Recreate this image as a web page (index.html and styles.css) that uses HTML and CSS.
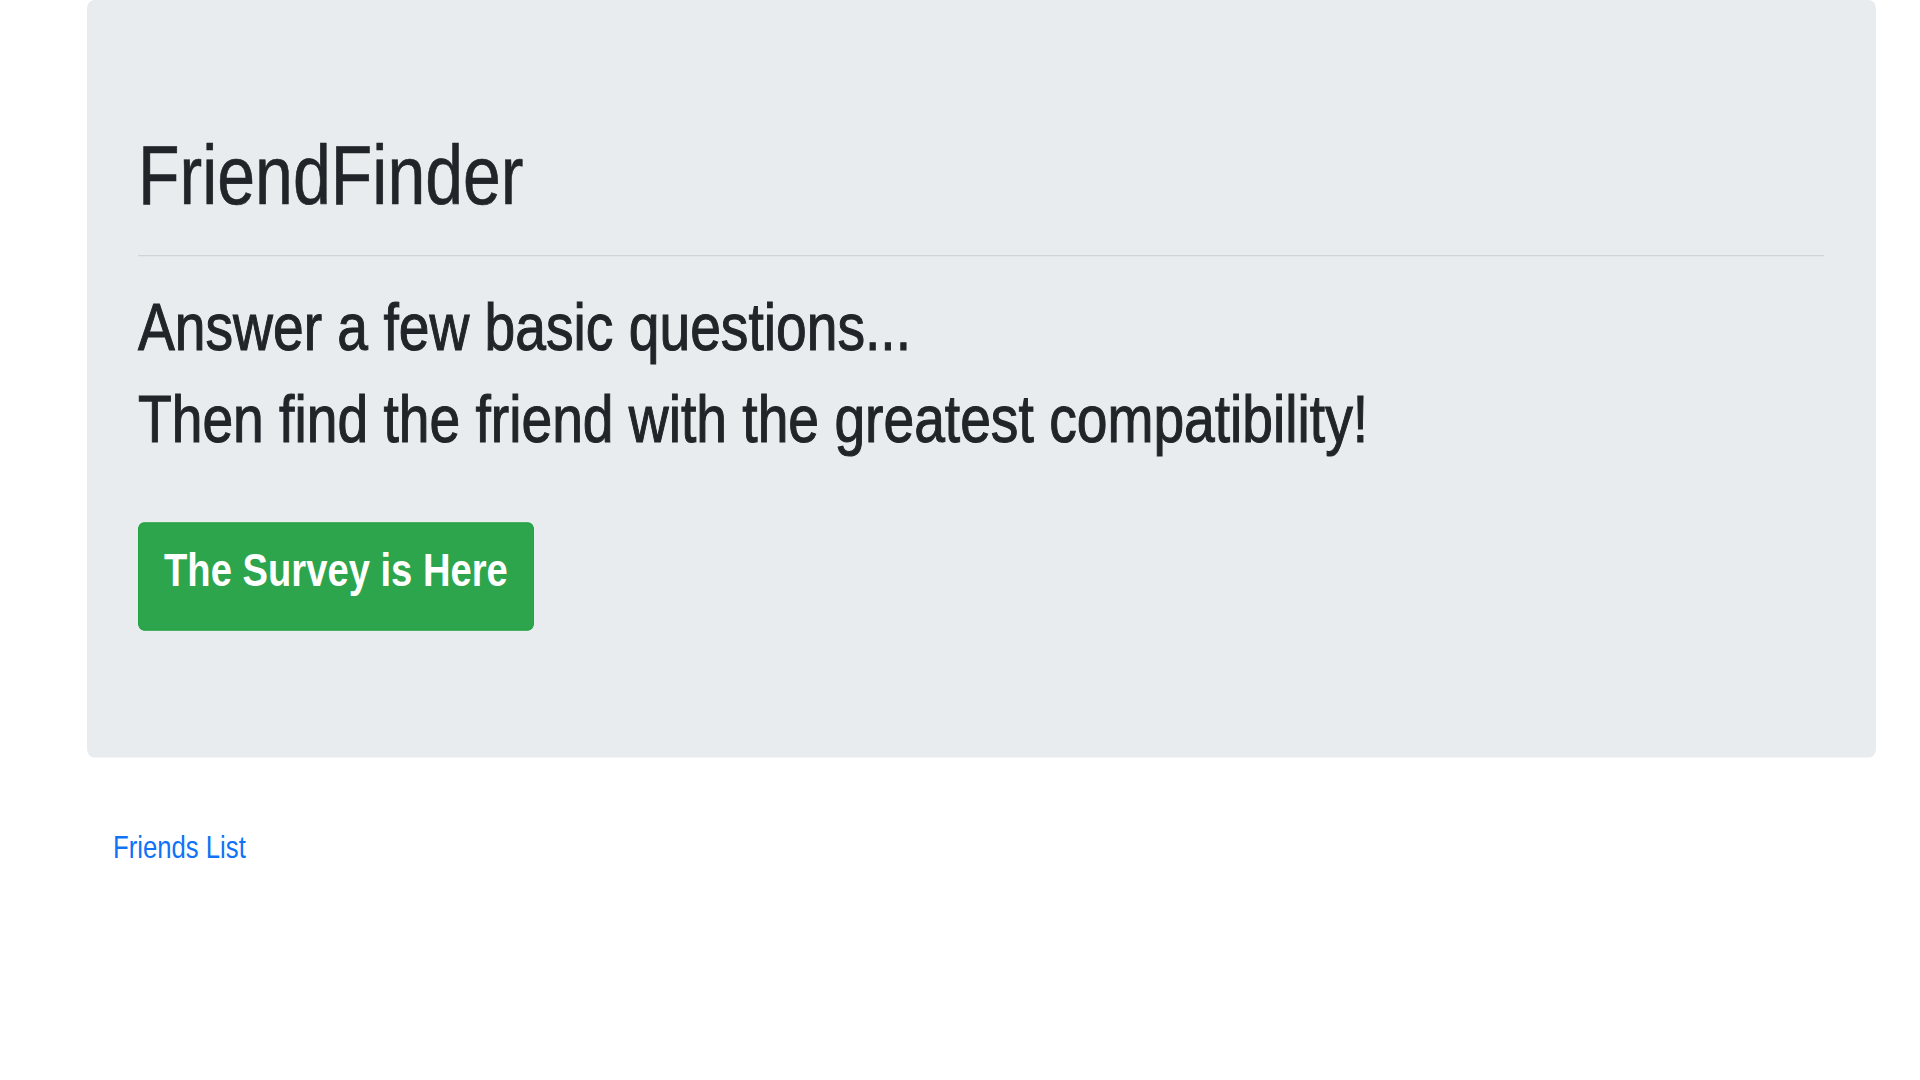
FILE: index.html
```html
<!DOCTYPE html>
<html lang="en">
<head>
<meta charset="utf-8">
<title>FriendFinder</title>
<link rel="stylesheet" href="styles.css">
</head>
<body>
<div class="page">
  <div class="jumbotron">
    <h1 class="title">FriendFinder</h1>
    <hr class="rule">
    <div class="lead">
      <h2 class="lead-line">Answer a few basic questions...</h2>
      <h2 class="lead-line">Then find the friend with the greatest compatibility!</h2>
    </div>
    <a class="btn-survey" href="#">The Survey is Here</a>
  </div>
  <div class="footer-links">
    <a class="friends-link" href="#">Friends List</a>
  </div>
</div>
</body>
</html>
```
FILE: styles.css
```css
html, body {
  margin: 0;
  padding: 0;
  background: #ffffff;
}

body {
  font-family: "Liberation Sans", Arial, Helvetica, sans-serif;
  color: #212529;
  min-height: 1080px;
}

.page {
  transform: scaleY(1.22);
  transform-origin: 0 0;
  width: 1920px;
  height: 880px;
}

.jumbotron {
  box-sizing: border-box;
  margin-left: 87px;
  width: 1789px;
  height: 621px;
  padding: 103px 52px 0 51px;
  background: #e9ecef;
  border-radius: 7px;
}

.title {
  margin: 0;
  font-size: 68px;
  font-weight: 400;
  line-height: 1.2;
  color: #212529;
  -webkit-text-stroke: 0.5px #212529;
}

.rule {
  margin: 24.5px 0 0 0;
  height: 0;
  border: 0;
  border-top: 1.5px solid rgba(0, 0, 0, 0.1);
}

.lead {
  margin-top: 20.5px;
}

.lead-line {
  margin: 0;
  font-size: 55.2px;
  font-weight: 400;
  line-height: 75px;
  color: #212529;
  -webkit-text-stroke: 0.9px #212529;
}

.btn-survey {
  display: inline-block;
  margin-top: 47px;
  padding: 9.5px 25px 21px 25px;
  font-size: 38.2px;
  font-weight: 700;
  line-height: 1.5;
  color: #ffffff;
  text-decoration: none;
  background: #2ca54c;
  border: 1px solid #25a244;
  border-radius: 6px;
}

.footer-links {
  margin-top: 54px;
  padding-left: 113px;
}

.friends-link {
  font-size: 25.7px;
  line-height: 1.5;
  color: #0f73f7;
  text-decoration: none;
}
```
